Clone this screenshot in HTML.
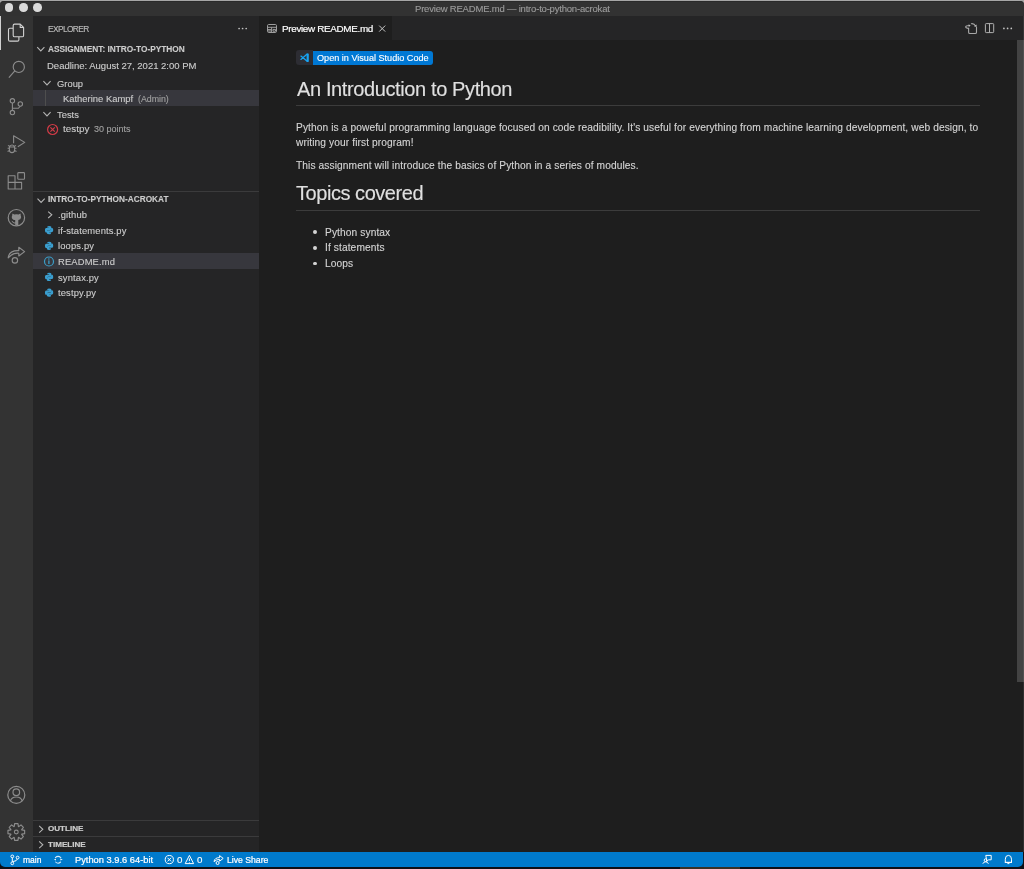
<!DOCTYPE html>
<html><head><meta charset="utf-8"><style>
html,body{margin:0;padding:0;width:1024px;height:869px;overflow:hidden;background:#1b1b1d;}
body{position:relative;font-family:"Liberation Sans",sans-serif;}
.t{will-change:transform;-webkit-text-stroke:0.12px currentColor;}
.t{position:absolute;white-space:nowrap;}
.r{position:absolute;}
</style></head><body>
<div class="r" style="left:0px;top:0px;width:1024px;height:869px;background:#0e0f16;"></div>
<div class="r" style="left:0px;top:0px;width:1024px;height:6px;background:#a6a6a6;"></div>
<div class="r" style="left:680px;top:867px;width:60px;height:2px;background:#3a3226;"></div>
<div class="r" style="left:0px;top:1px;width:1024px;height:15px;background:#323232;border-radius:4px 4px 0 0;box-shadow:inset 0 1px 0 #2a2a2a;"></div>
<div class="r" style="left:4.8px;top:3.2px;width:8.6px;height:8.6px;border-radius:50%;background:#dadada;"></div>
<div class="r" style="left:19.099999999999998px;top:3.2px;width:8.6px;height:8.6px;border-radius:50%;background:#dadada;"></div>
<div class="r" style="left:33.2px;top:3.2px;width:8.6px;height:8.6px;border-radius:50%;background:#dadada;"></div>
<div class="t" style="left:414.9px;top:2.67px;font-size:9.5px;line-height:11.88px;color:#9b9b9b;letter-spacing:-0.2px;">Preview README.md — intro-to-python-acrokat</div>
<div class="r" style="left:0px;top:16px;width:33px;height:836px;background:#333333;"></div>
<div class="r" style="left:0px;top:16px;width:1px;height:34px;background:#d0d0d0;"></div>
<div class="r" style="left:33px;top:16px;width:226px;height:836px;background:#252526;"></div>
<div class="r" style="left:259px;top:16px;width:765px;height:836px;background:#1e1e1e;"></div>
<div class="r" style="left:259px;top:16px;width:765px;height:24px;background:#252526;"></div>
<div class="r" style="left:259px;top:16px;width:133px;height:24px;background:#1e1e1e;"></div>
<div class="r" style="left:0px;top:851.8px;width:1023px;height:15.4px;background:#007acc;border-radius:0 0 5px 5px;"></div>
<div class="t" style="left:47.6px;top:24.14px;font-size:8.4px;line-height:10.5px;color:#bbbbbb;letter-spacing:-0.62px;">EXPLORER</div>
<div class="t" style="left:47.8px;top:43.63px;font-size:8.3px;line-height:10.38px;color:#cccccc;font-weight:bold;">ASSIGNMENT: INTRO-TO-PYTHON</div>
<div class="t" style="left:46.8px;top:60.17px;font-size:9.5px;line-height:11.88px;color:#cccccc;">Deadline: August 27, 2021 2:00 PM</div>
<div class="t" style="left:57.1px;top:77.67px;font-size:9.4px;line-height:11.75px;color:#cccccc;">Group</div>
<div class="r" style="left:33px;top:89.8px;width:226px;height:16px;background:#37373d;"></div>
<div class="r" style="left:45px;top:89.8px;width:1px;height:16px;background:#4e4e4e;"></div>
<div class="t" style="left:63px;top:93.35px;font-size:9.42px;line-height:11.78px;color:#cccccc;">Katherine Kampf</div>
<div class="t" style="left:138.3px;top:93.95px;font-size:8.8px;line-height:11.0px;color:#a0a0a0;">(Admin)</div>
<div class="t" style="left:57.1px;top:108.77px;font-size:9.4px;line-height:11.75px;color:#cccccc;">Tests</div>
<div class="t" style="left:62.5px;top:123.28px;font-size:9.9px;line-height:12.38px;color:#cccccc;">testpy</div>
<div class="t" style="left:94px;top:124.16px;font-size:9.0px;line-height:11.25px;color:#a0a0a0;">30 points</div>
<div class="r" style="left:33px;top:191px;width:226px;height:1px;background:#3b3b3c;"></div>
<div class="t" style="left:47.9px;top:194.66px;font-size:8.27px;line-height:10.34px;color:#cccccc;font-weight:bold;">INTRO-TO-PYTHON-ACROKAT</div>
<div class="r" style="left:33px;top:252.8px;width:226px;height:16.2px;background:#37373d;"></div>
<div class="t" style="left:57.8px;top:209.07px;font-size:9.4px;line-height:11.75px;color:#cccccc;letter-spacing:0.15px;">.github</div>
<div class="t" style="left:57.8px;top:224.67px;font-size:9.4px;line-height:11.75px;color:#cccccc;letter-spacing:0.15px;">if-statements.py</div>
<div class="t" style="left:57.8px;top:240.47px;font-size:9.4px;line-height:11.75px;color:#cccccc;letter-spacing:0.15px;">loops.py</div>
<div class="t" style="left:57.8px;top:256.07px;font-size:9.4px;line-height:11.75px;color:#cccccc;letter-spacing:0.15px;">README.md</div>
<div class="t" style="left:57.8px;top:271.57px;font-size:9.4px;line-height:11.75px;color:#cccccc;letter-spacing:0.15px;">syntax.py</div>
<div class="t" style="left:57.8px;top:286.87px;font-size:9.4px;line-height:11.75px;color:#cccccc;letter-spacing:0.15px;">testpy.py</div>
<div class="r" style="left:33px;top:820.4px;width:226px;height:1px;background:#3b3b3c;"></div>
<div class="t" style="left:47.8px;top:824.46px;font-size:8.07px;line-height:10.09px;color:#cccccc;font-weight:bold;-webkit-text-stroke:0.22px currentColor;">OUTLINE</div>
<div class="r" style="left:33px;top:835.9px;width:226px;height:1px;background:#3b3b3c;"></div>
<div class="t" style="left:47.8px;top:840.25px;font-size:8.08px;line-height:10.1px;color:#cccccc;font-weight:bold;-webkit-text-stroke:0.22px currentColor;">TIMELINE</div>
<div class="t" style="left:282px;top:22.78px;font-size:9.9px;line-height:12.38px;color:#ffffff;letter-spacing:-0.33px;-webkit-text-stroke:0.18px #ffffff;">Preview README.md</div>
<div class="r" style="left:313px;top:50.6px;width:119.8px;height:14.2px;background:#0078d4;border-radius:0 3px 3px 0;"></div>
<div class="r" style="left:296.2px;top:50.4px;width:16.8px;height:14.6px;background:#2d2d33;border-radius:3px 0 0 3px;"></div>
<div class="t" style="left:316.8px;top:52.56px;font-size:9.1px;line-height:11.38px;color:#ffffff;">Open in Visual Studio Code</div>
<div class="t" style="left:296.6px;top:77.07px;font-size:20px;line-height:25.0px;color:#e0e0e0;letter-spacing:-0.38px;">An Introduction to Python</div>
<div class="r" style="left:296px;top:105px;width:684px;height:1px;background:#3c3c3c;"></div>
<div class="t" style="left:296.3px;top:121.99px;font-size:10.2px;line-height:12.75px;color:#d4d4d4;letter-spacing:0.1px;">Python is a poweful programming language focused on code readibility. It's useful for everything from machine learning development, web design, to</div>
<div class="t" style="left:296.3px;top:137.19px;font-size:10.2px;line-height:12.75px;color:#d4d4d4;letter-spacing:0.1px;">writing your first program!</div>
<div class="t" style="left:296.3px;top:160.09px;font-size:10.2px;line-height:12.75px;color:#d4d4d4;letter-spacing:0.1px;">This assignment will introduce the basics of Python in a series of modules.</div>
<div class="t" style="left:296.1px;top:181.47px;font-size:20px;line-height:25.0px;color:#e0e0e0;letter-spacing:-0.45px;">Topics covered</div>
<div class="r" style="left:296px;top:210px;width:684px;height:1px;background:#3c3c3c;"></div>
<div class="r" style="left:313.1px;top:230.4px;width:3.9px;height:3.9px;background:#d4d4d4;border-radius:50%;"></div>
<div class="t" style="left:324.7px;top:226.89px;font-size:10.2px;line-height:12.75px;color:#d4d4d4;letter-spacing:0.1px;">Python syntax</div>
<div class="r" style="left:313.1px;top:245.7px;width:3.9px;height:3.9px;background:#d4d4d4;border-radius:50%;"></div>
<div class="t" style="left:324.7px;top:242.19px;font-size:10.2px;line-height:12.75px;color:#d4d4d4;letter-spacing:0.1px;">If statements</div>
<div class="r" style="left:313.1px;top:261.6px;width:3.9px;height:3.9px;background:#d4d4d4;border-radius:50%;"></div>
<div class="t" style="left:324.7px;top:258.09px;font-size:10.2px;line-height:12.75px;color:#d4d4d4;letter-spacing:0.1px;">Loops</div>
<div class="r" style="left:1017px;top:40.3px;width:7px;height:641.5px;background:#434343;"></div>
<div class="r" style="left:1023px;top:16px;width:1px;height:836px;background:rgba(255,255,255,0.08);"></div>
<div class="t" style="left:22.6px;top:855.34px;font-size:8.5px;line-height:10.62px;color:#ffffff;-webkit-text-stroke:0.22px currentColor;">main</div>
<div class="t" style="left:74.6px;top:854.77px;font-size:9.3px;line-height:11.62px;color:#ffffff;-webkit-text-stroke:0.22px currentColor;">Python 3.9.6 64-bit</div>
<div class="t" style="left:176.8px;top:854.48px;font-size:9.8px;line-height:12.25px;color:#ffffff;">0</div>
<div class="t" style="left:197.0px;top:854.48px;font-size:9.8px;line-height:12.25px;color:#ffffff;">0</div>
<div class="t" style="left:226.5px;top:855.39px;font-size:8.66px;line-height:10.82px;color:#ffffff;-webkit-text-stroke:0.22px currentColor;">Live Share</div>
<svg class="r" style="left:0;top:0" width="1024" height="869" viewBox="0 0 1024 869"><g fill="none" stroke="#d2d2d2" stroke-width="1.1" stroke-linejoin="round"><path d="M13.1 28.3 H9.9 Q8.5 28.3 8.5 29.7 V39.7 Q8.5 41.1 9.9 41.1 H17.5 Q18.9 41.1 18.9 39.7 V36.9"/><path d="M14.6 24.1 H20.2 L23.6 27.5 V35.4 Q23.6 36.8 22.2 36.8 H14.6 Q13.2 36.8 13.2 35.4 V25.5 Q13.2 24.1 14.6 24.1 Z"/><path d="M20.2 24.1 V27.5 H23.6"/></g><g fill="none" stroke="#8c8c8c" stroke-width="1.15"><circle cx="18.8" cy="66.9" r="5.6"/><path d="M14.8 70.9 L8.9 77.6"/></g><g fill="none" stroke="#8c8c8c" stroke-width="1.1"><circle cx="12.4" cy="100.8" r="2.2"/><circle cx="20.3" cy="104" r="2.2"/><circle cx="12.4" cy="112.6" r="2.2"/><path d="M12.4 103 V110.4"/><path d="M12.4 108.3 H18.4 L20.3 106.2"/></g><g fill="none" stroke="#8c8c8c" stroke-width="1.1" stroke-linejoin="round"><path d="M13.6 143.2 V135.8 L24.7 142.4 L17.8 146.7"/><path d="M9.6 146.3 Q12 143.6 14.4 146.3 M9.4 147 H14.6 V150 Q14.6 152.6 12 152.6 Q9.4 152.6 9.4 150 Z M7.6 148.3 H9.4 M14.6 148.3 H16.5 M7.6 151.6 L9.5 150.6 M16.5 151.6 L14.5 150.6 M8 145.4 L9.6 146.4 M16 145.4 L14.4 146.4"/></g><g fill="none" stroke="#8c8c8c" stroke-width="1.1" stroke-linejoin="round"><path d="M8.2 175.7 H15 V189 H8.2 Z M8.2 182.4 H21.6 V189 H15"/><rect x="17.8" y="172.6" width="6.7" height="6.7" rx="0.8"/></g><g><circle cx="16.4" cy="217.7" r="8.2" fill="none" stroke="#8c8c8c" stroke-width="1.2"/><path fill="#8c8c8c" d="M12.6 213.4 L14.2 214.4 Q16.4 213.9 18.6 214.4 L20.4 213.4 Q20.8 214.6 20.7 215.4 Q21.2 216.2 21.1 217.4 Q20.9 219.7 18.3 220.1 V225 Q16.7 225.5 15.2 225 V223.4 Q13.2 223.8 12.2 222 Q11.8 221.2 11.2 220.8 Q12.6 220.8 13.2 221.8 Q14 222.6 15.2 222.3 V220.1 Q12 219.7 11.8 217.4 Q11.7 216.2 12.2 215.4 Q12.1 214.6 12.6 213.4 Z"/></g><g fill="none" stroke="#8c8c8c" stroke-width="1.15" stroke-linejoin="round"><path d="M8.2 257.8 Q9 250.2 18.8 250.6 V247.2 L24.6 251.6 L18.8 256 V253.2 Q12.6 252.8 8.2 257.8 Z"/><circle cx="14.9" cy="260.4" r="2.7"/></g><g fill="none" stroke="#8c8c8c" stroke-width="1.2"><circle cx="16.3" cy="794.9" r="8.5"/><circle cx="16.3" cy="792.2" r="3.3"/><path d="M10.4 801 Q11.5 797 16.3 797 Q21.1 797 22.2 801"/></g><g fill="none" stroke="#8c8c8c" stroke-width="1.15" stroke-linejoin="round"><path d="M14.61 823.67 L17.99 823.67 L18.38 826.48 L18.73 826.63 L21.00 824.92 L23.38 827.30 L21.67 829.57 L21.82 829.92 L24.63 830.31 L24.63 833.69 L21.82 834.08 L21.67 834.43 L23.38 836.70 L21.00 839.08 L18.73 837.37 L18.38 837.52 L17.99 840.33 L14.61 840.33 L14.22 837.52 L13.87 837.37 L11.60 839.08 L9.22 836.70 L10.93 834.43 L10.78 834.08 L7.97 833.69 L7.97 830.31 L10.78 829.92 L10.93 829.57 L9.22 827.30 L11.60 824.92 L13.87 826.63 L14.22 826.48 Z"/><circle cx="16.3" cy="832" r="1.9"/></g><path d="M37.2 47.1 L40.800000000000004 50.9 L44.400000000000006 47.1" fill="none" stroke="#b4b4b4" stroke-width="1.1"/><path d="M43.4 81.1 L47.0 84.89999999999999 L50.6 81.1" fill="none" stroke="#b4b4b4" stroke-width="1.1"/><path d="M43.4 112.1 L47.0 115.89999999999999 L50.6 112.1" fill="none" stroke="#b4b4b4" stroke-width="1.1"/><path d="M37.5 198.6 L41.1 202.4 L44.7 198.6" fill="none" stroke="#b4b4b4" stroke-width="1.1"/><path d="M48.2 211.6 L51.800000000000004 214.79999999999998 L48.2 218.0" fill="none" stroke="#b4b4b4" stroke-width="1.1"/><path d="M39.2 825.9 L42.800000000000004 829.3 L39.2 832.6999999999999" fill="none" stroke="#b4b4b4" stroke-width="1.1"/><path d="M39.2 841.4 L42.800000000000004 844.8 L39.2 848.1999999999999" fill="none" stroke="#b4b4b4" stroke-width="1.1"/><g fill="none" stroke="#d23b47" stroke-width="1.2"><circle cx="52.6" cy="129.5" r="5"/><path d="M50.4 127.3 L54.8 131.7 M54.8 127.3 L50.4 131.7"/></g><g transform="translate(44.6 225.7) scale(0.56)" fill="#3a9ecf"><path d="M8 0.6 C4.6 0.6 4.8 2.1 4.8 2.1 V3.7 H8.1 V4.3 H3.4 C3.4 4.3 0.6 4 0.6 8.1 C0.6 12.2 3 12 3 12 H4.4 V10.1 C4.4 10.1 4.3 7.8 6.7 7.8 H9.8 C9.8 7.8 12 7.8 12 5.6 V2.8 C12 2.8 12.3 0.6 8 0.6 Z"/><path d="M8 0.6 C4.6 0.6 4.8 2.1 4.8 2.1 V3.7 H8.1 V4.3 H3.4 C3.4 4.3 0.6 4 0.6 8.1 C0.6 12.2 3 12 3 12 H4.4 V10.1 C4.4 10.1 4.3 7.8 6.7 7.8 H9.8 C9.8 7.8 12 7.8 12 5.6 V2.8 C12 2.8 12.3 0.6 8 0.6 Z" transform="rotate(180 8 8) translate(0 0)"/></g><g transform="translate(44.6 241.29999999999998) scale(0.56)" fill="#3a9ecf"><path d="M8 0.6 C4.6 0.6 4.8 2.1 4.8 2.1 V3.7 H8.1 V4.3 H3.4 C3.4 4.3 0.6 4 0.6 8.1 C0.6 12.2 3 12 3 12 H4.4 V10.1 C4.4 10.1 4.3 7.8 6.7 7.8 H9.8 C9.8 7.8 12 7.8 12 5.6 V2.8 C12 2.8 12.3 0.6 8 0.6 Z"/><path d="M8 0.6 C4.6 0.6 4.8 2.1 4.8 2.1 V3.7 H8.1 V4.3 H3.4 C3.4 4.3 0.6 4 0.6 8.1 C0.6 12.2 3 12 3 12 H4.4 V10.1 C4.4 10.1 4.3 7.8 6.7 7.8 H9.8 C9.8 7.8 12 7.8 12 5.6 V2.8 C12 2.8 12.3 0.6 8 0.6 Z" transform="rotate(180 8 8) translate(0 0)"/></g><g transform="translate(44.6 272.5) scale(0.56)" fill="#3a9ecf"><path d="M8 0.6 C4.6 0.6 4.8 2.1 4.8 2.1 V3.7 H8.1 V4.3 H3.4 C3.4 4.3 0.6 4 0.6 8.1 C0.6 12.2 3 12 3 12 H4.4 V10.1 C4.4 10.1 4.3 7.8 6.7 7.8 H9.8 C9.8 7.8 12 7.8 12 5.6 V2.8 C12 2.8 12.3 0.6 8 0.6 Z"/><path d="M8 0.6 C4.6 0.6 4.8 2.1 4.8 2.1 V3.7 H8.1 V4.3 H3.4 C3.4 4.3 0.6 4 0.6 8.1 C0.6 12.2 3 12 3 12 H4.4 V10.1 C4.4 10.1 4.3 7.8 6.7 7.8 H9.8 C9.8 7.8 12 7.8 12 5.6 V2.8 C12 2.8 12.3 0.6 8 0.6 Z" transform="rotate(180 8 8) translate(0 0)"/></g><g transform="translate(44.6 288.09999999999997) scale(0.56)" fill="#3a9ecf"><path d="M8 0.6 C4.6 0.6 4.8 2.1 4.8 2.1 V3.7 H8.1 V4.3 H3.4 C3.4 4.3 0.6 4 0.6 8.1 C0.6 12.2 3 12 3 12 H4.4 V10.1 C4.4 10.1 4.3 7.8 6.7 7.8 H9.8 C9.8 7.8 12 7.8 12 5.6 V2.8 C12 2.8 12.3 0.6 8 0.6 Z"/><path d="M8 0.6 C4.6 0.6 4.8 2.1 4.8 2.1 V3.7 H8.1 V4.3 H3.4 C3.4 4.3 0.6 4 0.6 8.1 C0.6 12.2 3 12 3 12 H4.4 V10.1 C4.4 10.1 4.3 7.8 6.7 7.8 H9.8 C9.8 7.8 12 7.8 12 5.6 V2.8 C12 2.8 12.3 0.6 8 0.6 Z" transform="rotate(180 8 8) translate(0 0)"/></g><g><circle cx="49" cy="261.5" r="4.5" fill="none" stroke="#3b9ec8" stroke-width="1.2"/><circle cx="48.9" cy="259.1" r="0.75" fill="#3b9ec8"/><rect x="48.25" y="260.4" width="1.3" height="3.6" fill="#3b9ec8"/></g><circle cx="239.1" cy="28.5" r="0.85" fill="#c5c5c5"/><circle cx="242.6" cy="28.5" r="0.85" fill="#c5c5c5"/><circle cx="246.2" cy="28.5" r="0.85" fill="#c5c5c5"/><g fill="none" stroke="#9e9e9e" stroke-width="1"><rect x="267.5" y="24.5" width="9" height="8" rx="1.2"/><path d="M268 27.3 H276 M271.6 27.3 V32.4 M268 29.6 H271.6 M268 31 H271.3 M273 29.4 H275.5 V31.2 H273 Z"/></g><path d="M379.2 25.6 L385.2 31.6 M385.2 25.6 L379.2 31.6" stroke="#c8c8c8" stroke-width="1" fill="none"/><g fill="none" stroke="#a8a8a8" stroke-width="1.1" stroke-linejoin="round" stroke-linecap="round"><path d="M968.6 28.4 V32.2 Q968.6 33.5 969.9 33.5 H975.2 Q976.5 33.5 976.5 32.2 V27"/><path d="M968.6 28.4 Q965.7 28.3 965.7 26.8 Q965.8 25.5 969.6 25.5"/><path d="M971.4 23.7 Q974.3 23.4 975.5 26"/></g><path d="M968.6 24.2 L970.6 25.5 L968.8 26.9 Z M974 26.4 L976.8 26.4 L976.4 24.4 Z" fill="#c0c0c0"/><g fill="none" stroke="#b0b0b0" stroke-width="1"><rect x="985.4" y="23.6" width="8.3" height="9" rx="0.8"/><path d="M989.5 23.6 V32.6"/></g><circle cx="1003.9" cy="28.4" r="0.85" fill="#c5c5c5"/><circle cx="1007.6" cy="28.4" r="0.85" fill="#c5c5c5"/><circle cx="1011.3" cy="28.4" r="0.85" fill="#c5c5c5"/><g stroke="#17a4f4" stroke-width="1.35" fill="none" stroke-linecap="round"><path d="M307.2 54.1 L300.9 59.4 M307.2 61.3 L300.9 56.1"/></g><rect x="306.6" y="53.4" width="2.2" height="8.5" rx="0.6" fill="#17a4f4"/><g fill="none" stroke="#ffffff" stroke-width="1"><circle cx="12.3" cy="856.4" r="1.4"/><circle cx="12.3" cy="863.3" r="1.4"/><circle cx="17.6" cy="857.6" r="1.4"/><path d="M12.3 857.8 V861.9 M17.4 859 Q17 861.2 12.6 861.6"/></g><g fill="none" stroke="#d8ecfa" stroke-width="1.05" stroke-linecap="round"><path d="M55.4 857.6 Q58 855.2 60.8 857.6"/><path d="M60.6 862 Q58 864.4 55.6 862"/></g><path d="M60.2 858.6 L62.8 859.5 L60.4 860.4 Z M56 858.8 L53.8 859.6 L56 860.4 Z" fill="#e6f3fc"/><g fill="none" stroke="#ffffff" stroke-width="1"><circle cx="169.3" cy="859.6" r="4.1"/><path d="M167.5 857.8 L171.1 861.4 M171.1 857.8 L167.5 861.4"/></g><g fill="none" stroke="#ffffff" stroke-width="1" stroke-linejoin="round"><path d="M189.4 855.4 L193.6 863.6 H185.2 Z"/><path d="M189.4 858.4 V861 M189.4 862 V862.6"/></g><g fill="none" stroke="#ffffff" stroke-width="1" stroke-linejoin="round"><path d="M214 861.6 Q214.6 857.6 219.6 857.6 V855.6 L223.2 858.4 L219.6 861.2 V859.4 Q216.4 859.4 214 861.6 Z"/><circle cx="217.6" cy="863" r="1.5"/></g><g fill="none" stroke="#ffffff" stroke-width="1" stroke-linejoin="round"><path d="M985.8 855.4 H991.2 V859.8 H988.4 L986.8 861.4 Z"/><circle cx="985.6" cy="860.2" r="1.4"/><path d="M982.8 863.8 Q983.4 861.8 985.6 861.8 Q987.8 861.8 988.4 863.8"/></g><g fill="none" stroke="#ffffff" stroke-width="1" stroke-linejoin="round"><path d="M1005.3 862.4 V859.2 Q1005.3 855.4 1008.4 855.4 Q1011.5 855.4 1011.5 859.2 V862.4 H1005.3 Z M1004.8 862.4 H1012 M1007.4 863.6 H1009.4"/></g></svg>
</body></html>
